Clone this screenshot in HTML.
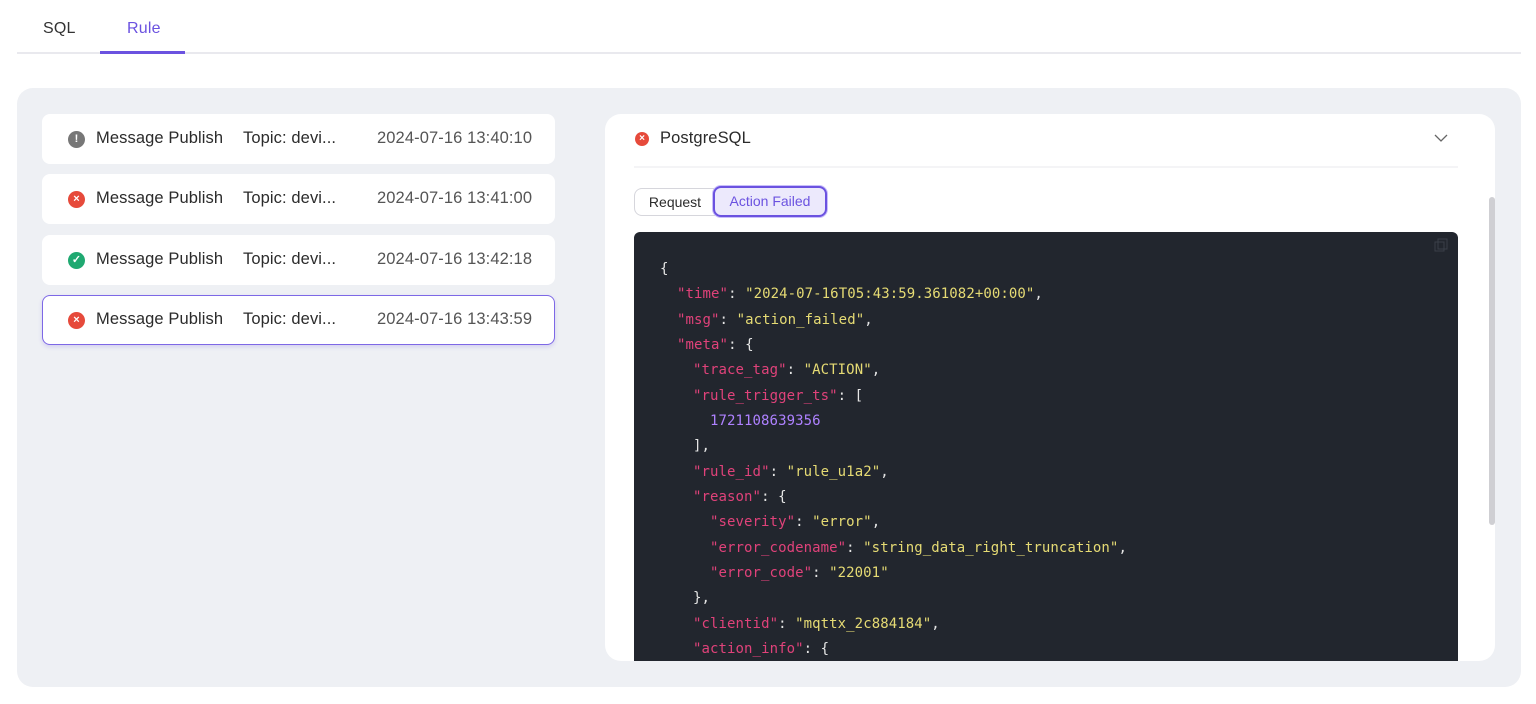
<!DOCTYPE html>
<html><head><style>
*{box-sizing:border-box;margin:0;padding:0}
body{width:1536px;height:704px;background:#fff;font-family:"Liberation Sans",sans-serif;position:relative;overflow:hidden}
.abs{position:absolute}
.tab{position:absolute;top:20px;font-size:16px;color:#333;letter-spacing:0.2px}
.item{position:absolute;left:42px;width:513px;height:50px;background:#fff;border-radius:8px;font-size:16.5px;color:#2b2b2b;letter-spacing:0.1px}
.item span{position:absolute;top:15px}
.ic{position:absolute;left:26px;top:17px;width:17px;height:17px;border-radius:50%;color:#fff;font-size:11px;font-weight:bold;text-align:center;line-height:17px;letter-spacing:0}
.code{position:absolute;left:634px;top:232px;width:824px;height:429px;background:#22262e;border-radius:6px 6px 0 0;font-family:"DejaVu Sans Mono","Liberation Mono",monospace;font-size:14px;letter-spacing:0.08px;color:#e6e6e6;overflow:hidden}
.ln{position:absolute;white-space:pre}
.k{color:#e0427a}.s{color:#e6db74}.n{color:#ae81ff}
</style></head><body>
<div class="tab" style="left:43px">SQL</div>
<div class="tab" style="left:127px;color:#6b52e0">Rule</div>
<div class="abs" style="left:17px;top:52px;width:1504px;height:2px;background:#e9e9ee"></div>
<div class="abs" style="left:100px;top:51px;width:85px;height:3px;background:#6b52e0"></div>
<div class="abs" style="left:17px;top:88px;width:1504px;height:599px;background:#eef0f4;border-radius:16px"></div>

<div class="item" style="top:114px"><div class="ic" style="background:#777">!</div><span style="left:54px">Message Publish</span><span style="left:201px">Topic: devi...</span><span style="left:335px;color:#555">2024-07-16 13:40:10</span></div>
<div class="item" style="top:174px"><div class="ic" style="background:#e64a3b">×</div><span style="left:54px">Message Publish</span><span style="left:201px">Topic: devi...</span><span style="left:335px;color:#555">2024-07-16 13:41:00</span></div>
<div class="item" style="top:235px"><div class="ic" style="background:#1fa971">✓</div><span style="left:54px">Message Publish</span><span style="left:201px">Topic: devi...</span><span style="left:335px;color:#555">2024-07-16 13:42:18</span></div>
<div class="item" style="top:295px;border:1px solid #7d68e6;box-shadow:0 2px 4px rgba(107,82,224,.2)"><div class="ic" style="background:#e64a3b;left:25px;top:16px">×</div><span style="left:53px;top:14px">Message Publish</span><span style="left:200px;top:14px">Topic: devi...</span><span style="left:334px;top:14px;color:#555">2024-07-16 13:43:59</span></div>

<div class="abs" style="left:605px;top:114px;width:890px;height:547px;background:#fff;border-radius:16px"></div>
<div class="abs" style="left:635px;top:132px;width:14px;height:14px;border-radius:50%;background:#e64a3b;color:#fff;font-size:10px;font-weight:bold;text-align:center;line-height:14px">×</div>
<div class="abs" style="left:660px;top:129px;font-size:16.5px;color:#2b2b2b;letter-spacing:0.1px">PostgreSQL</div>
<svg class="abs" style="left:1434px;top:133px" width="14" height="10"><path d="M1 2l6 6 6-6" fill="none" stroke="#666" stroke-width="1.3"/></svg>
<div class="abs" style="left:634px;top:166px;width:824px;height:2px;background:#f4f4f6"></div>
<div class="abs" style="left:634px;top:188px;width:82px;height:28px;border:1px solid #d6d6dc;border-radius:8px 0 0 8px;font-size:14px;color:#2b2b2b;text-align:center;line-height:26px">Request</div>
<div class="abs" style="left:713px;top:186px;width:114px;height:31px;border:2px solid #6b52e0;border-radius:8px;background:#ece9fc;font-size:14px;color:#6b52e0;text-align:center;line-height:27px;box-shadow:0 0 0 1px #c8befa">Action Failed</div>
<div class="abs" style="left:1489px;top:197px;width:6px;height:328px;background:#cfcfd3;border-radius:3px"></div>

<div class="code">
<svg class="abs" style="left:800px;top:6px" width="14" height="14"><rect x="4" y="1" width="9" height="10" fill="none" stroke="#3a3f48"/><rect x="1" y="4" width="9" height="9" fill="none" stroke="#3a3f48"/></svg>
<div class="ln" style="left:26px;top:29px">{</div>
<div class="ln" style="left:43px;top:54px"><span class="k">"time"</span>: <span class="s">"2024-07-16T05:43:59.361082+00:00"</span>,</div>
<div class="ln" style="left:43px;top:80px"><span class="k">"msg"</span>: <span class="s">"action_failed"</span>,</div>
<div class="ln" style="left:43px;top:105px"><span class="k">"meta"</span>: {</div>
<div class="ln" style="left:59px;top:130px"><span class="k">"trace_tag"</span>: <span class="s">"ACTION"</span>,</div>
<div class="ln" style="left:59px;top:156px"><span class="k">"rule_trigger_ts"</span>: [</div>
<div class="ln" style="left:76px;top:181px"><span class="n">1721108639356</span></div>
<div class="ln" style="left:59px;top:206px">],</div>
<div class="ln" style="left:59px;top:232px"><span class="k">"rule_id"</span>: <span class="s">"rule_u1a2"</span>,</div>
<div class="ln" style="left:59px;top:257px"><span class="k">"reason"</span>: {</div>
<div class="ln" style="left:76px;top:282px"><span class="k">"severity"</span>: <span class="s">"error"</span>,</div>
<div class="ln" style="left:76px;top:308px"><span class="k">"error_codename"</span>: <span class="s">"string_data_right_truncation"</span>,</div>
<div class="ln" style="left:76px;top:333px"><span class="k">"error_code"</span>: <span class="s">"22001"</span></div>
<div class="ln" style="left:59px;top:358px">},</div>
<div class="ln" style="left:59px;top:384px"><span class="k">"clientid"</span>: <span class="s">"mqttx_2c884184"</span>,</div>
<div class="ln" style="left:59px;top:409px"><span class="k">"action_info"</span>: {</div>
</div>
</body></html>
